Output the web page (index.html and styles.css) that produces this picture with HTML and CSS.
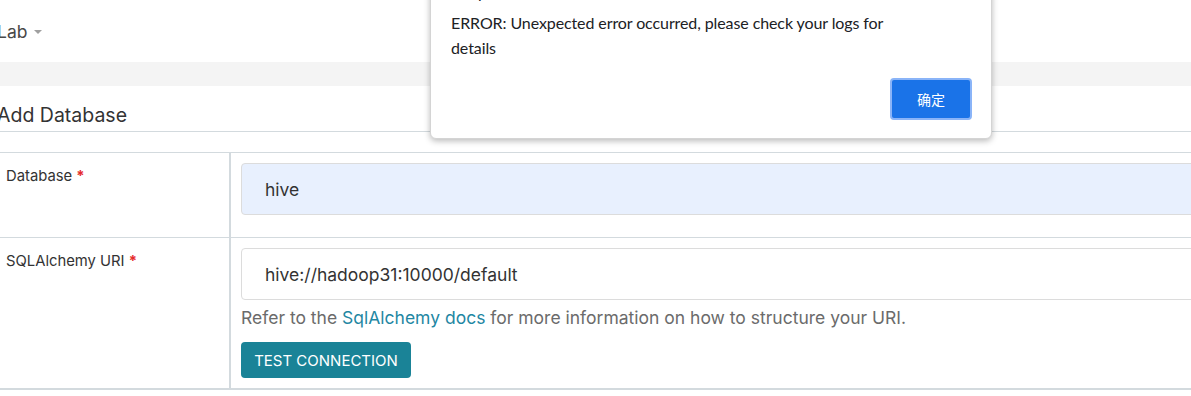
FILE: index.html
```html
<!DOCTYPE html>
<html lang="en">
<head>
    <meta charset="UTF-8">
    <meta name="viewport" content="width=device-width, initial-scale=1.0">
    <title>Add Database</title>
    <link rel="stylesheet" href="styles.css">
</head>
<body>
    <div class="page">
        <header class="navbar">
            <span class="brand">Lab</span>
            <span class="caret"></span>
        </header>
        <div class="band"></div>
        <div class="panel">
            <h4 class="panel-title">Add Database</h4>
            <div class="form-table">
                <div class="form-row">
                    <div class="form-label">Database <span class="req">*</span></div>
                    <div class="form-field">
                        <div class="input autofill">hive</div>
                    </div>
                </div>
                <div class="form-row last">
                    <div class="form-label">SQLAlchemy URI <span class="req">*</span></div>
                    <div class="form-field">
                        <div class="input">hive://hadoop31:10000/default</div>
                        <p class="help">Refer to the <a href="#">SqlAlchemy docs</a> for more information on how to structure your URI.</p>
                        <button class="btn-test">TEST CONNECTION</button>
                    </div>
                </div>
            </div>
        </div>
    </div>

    <!-- 浏览器弹出的 alert 框 -->
    <div class="alert">
        <div class="alert-title">hadoop31:8088 显示</div>
        <div class="alert-msg">ERROR: Unexpected error occurred, please check your logs for details</div>
        <div class="alert-actions">
            <button class="btn-ok">确定</button>
        </div>
    </div>
</body>
</html>
```

FILE: styles.css
```css
* {
box-sizing: border-box;
}

body {
margin: 0;
overflow: hidden;
background: #fff;
font-family: Inter, "Noto Sans", sans-serif;
color: #333;
}

.page {
width: 1320px;
margin-left: -3px;
}

.navbar {
height: 62px;
display: flex;
align-items: center;
gap: 7px;
}

.brand {
font-size: 17.5px;
color: #484848;
}

.caret {
width: 0;
height: 0;
border-left: 4px solid transparent;
border-right: 4px solid transparent;
border-top: 4px solid #a0a0a0;
margin-top: 2px;
}

.band {
height: 24px;
background: #f4f4f4;
}

.panel-title {
margin: 0;
padding: 18px 0 5px 0;
font-size: 19.5px;
font-weight: 400;
line-height: 22px;
color: #333;
border-bottom: 1px solid #d3dade;
}

.form-table {
margin-top: 20px;
border-top: 1px solid #d3dade;
border-bottom: 2px solid #d3dade;
}

.form-row {
display: grid;
grid-template-columns: 234px 1fr;
border-bottom: 1px solid #d3dade;
}

.form-row.last {
border-bottom: none;
}

.form-label {
padding: 13px 9px;
font-size: 14.8px;
line-height: 20px;
color: #333;
border-right: 2px solid #d3dade;
}

.req {
color: #e52b2b;
font-weight: 700;
}

.form-field {
padding: 10px 10px 10px 10px;
}

.input {
height: 52px;
border: 1px solid #dcdcdc;
border-radius: 4px;
padding: 0 23px;
display: flex;
align-items: center;
font-size: 17.5px;
color: #333;
background: #fff;
}

.input.autofill {
background: #e8f0fe;
margin-bottom: 12px;
}

.help {
margin: 6px 0 0 0;
font-size: 17.5px;
line-height: 24px;
color: #6b6b6b;
}

.help a {
color: #1f87a3;
text-decoration: none;
}

.btn-test {
margin-top: 12px;
width: 170px;
height: 36px;
border: none;
border-radius: 4px;
background: #1a8397;
color: #fff;
font-family: Inter, sans-serif;
font-size: 15px;
display: block;
}

.alert {
position: absolute;
left: 430px;
top: -31px;
width: 562px;
height: 170px;
background: #fff;
border: 1px solid #d4d4d4;
border-radius: 6px;
box-shadow: 0 2px 6px rgba(0, 0, 0, 0.28);
padding: 12px 19px 18px 20px;
font-family: Lato, "Noto Sans CJK SC", sans-serif;
color: #202124;
}

.alert-title {
height: 20px;
margin-left: -17px;
font-size: 16px;
line-height: 20px;
}

.alert-msg {
margin-top: 8px;
font-size: 16px;
letter-spacing: -0.1px;
line-height: 25px;
width: 445px;
}

.alert-actions {
margin-top: 18px;
display: flex;
justify-content: flex-end;
}

.btn-ok {
width: 82px;
height: 42px;
border: 2px solid #8ab4f8;
border-radius: 4px;
background: #1a73e8;
color: #fff;
font-family: "Noto Sans CJK SC", sans-serif;
font-size: 14px;
}
```
